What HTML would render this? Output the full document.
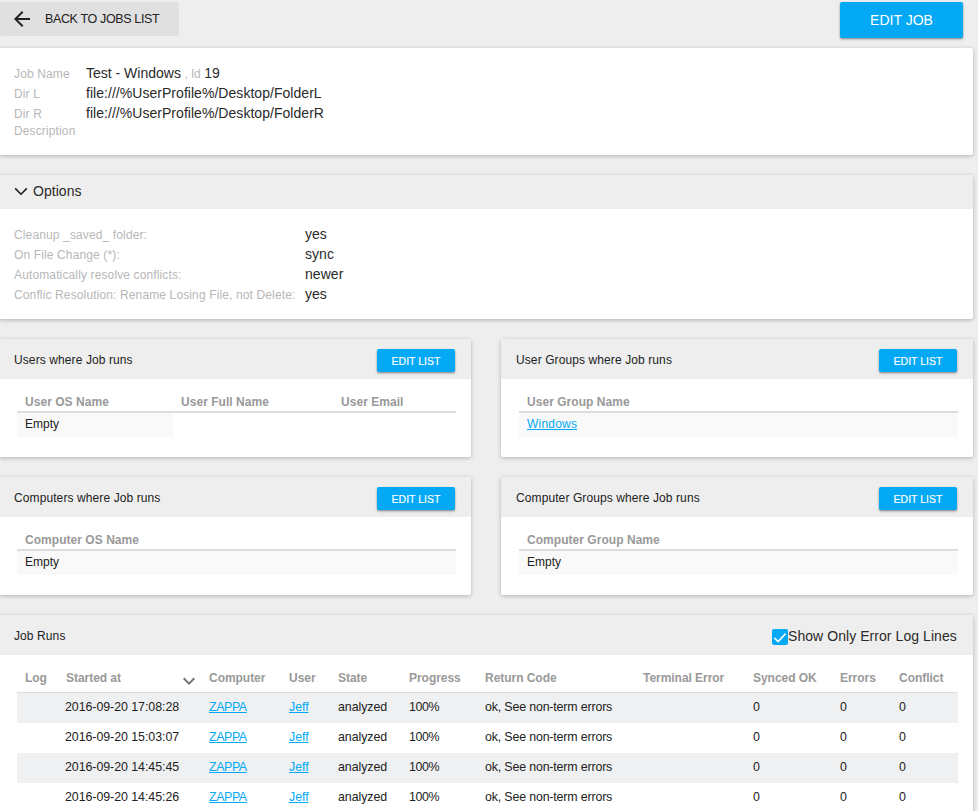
<!DOCTYPE html>
<html lang="en">
<head>
<meta charset="utf-8">
<title>Job</title>
<style>
html,body{margin:0;padding:0;}
body{width:978px;height:811px;overflow:hidden;position:relative;background:#eeeeee;font-family:"Liberation Sans",sans-serif;color:#212121;font-size:14px;}
*{box-sizing:border-box;}
.card{position:absolute;background:#fff;border-radius:2px;box-shadow:0 1px 4px 0 rgba(0,0,0,.26);}
.hdr{position:absolute;left:0;top:0;right:0;background:#eeeeee;border-radius:2px 2px 0 0;}
.btn{position:absolute;border-radius:2px;text-align:center;white-space:nowrap;}
.blue{background:#03a9f4;color:#fff;box-shadow:0 1px 2px 0 rgba(0,0,0,.36),0 2px 3px 0 rgba(0,0,0,.1);}
.t{position:absolute;white-space:nowrap;line-height:1;}
.lbl{color:#b7b7b7;font-size:12px;letter-spacing:0.13px;}
.val{color:#2a2a2a;font-size:14px;letter-spacing:0.04px;}
.ttl{font-size:12px;color:#212121;letter-spacing:0.1px;}
a{color:#03a9f4;text-decoration:underline;}
table{position:absolute;border-collapse:separate;border-spacing:0;table-layout:fixed;}
th{color:#999999;font-weight:bold;font-size:12px;letter-spacing:0.04px;text-align:left;padding:0 8px;white-space:nowrap;vertical-align:top;}
td{font-size:12px;color:#212121;padding:0 8px;white-space:nowrap;vertical-align:top;}
.small th{height:21px;border-bottom:2px solid #dddddd;padding-top:3px;line-height:14px;}
.small td{height:24px;padding-top:4px;line-height:14px;}
.small td.z{background:#f9f9f9;}
.runs th{letter-spacing:-0.04px;height:38px;border-bottom:1px solid #dddddd;padding-top:16px;line-height:14px;}
.runs td{height:30px;padding-top:7px;line-height:14px;font-size:12.4px;letter-spacing:-0.05px;}
.runs tr.z td{background:#eff0f1;}
.runs td:nth-child(2){padding-left:7px;}
.runs td:nth-child(3){letter-spacing:-0.4px;}
.runs td:nth-child(6){letter-spacing:-0.35px;}
.runs td:nth-child(7){letter-spacing:-0.16px;}
</style>
</head>
<body>

<!-- top bar -->
<div class="btn" style="left:0;top:2px;width:179px;height:34px;background:#e0e0e0;">
  <svg style="position:absolute;left:10px;top:5px" width="24" height="24" viewBox="0 0 24 24"><path d="M20 11H7.83l5.59-5.59L12 4l-8 8 8 8 1.41-1.41L7.83 13H20v-2z" fill="#212121"/></svg>
  <span class="t" style="left:45px;top:11px;font-size:12.5px;letter-spacing:-0.36px;color:#212121;">BACK TO JOBS LIST</span>
</div>
<div class="btn blue" style="left:840px;top:2px;width:123px;height:36px;font-size:14px;line-height:36px;">EDIT JOB</div>

<!-- job info -->
<div class="card" style="left:-1px;top:48px;width:974px;height:107px;">
  <span class="t lbl" style="left:15px;top:20px;">Job Name</span>
  <span class="t val" style="left:87px;top:18px;letter-spacing:0;">Test - Windows <span class="lbl" style="letter-spacing:-0.3px;">, Id</span> 19</span>
  <span class="t lbl" style="left:15px;top:40px;">Dir L</span>
  <span class="t val" style="left:87px;top:38px;">file:///%UserProfile%/Desktop/FolderL</span>
  <span class="t lbl" style="left:15px;top:60px;">Dir R</span>
  <span class="t val" style="left:87px;top:58px;">file:///%UserProfile%/Desktop/FolderR</span>
  <span class="t lbl" style="left:15px;top:77px;">Description</span>
</div>

<!-- options -->
<div class="card" style="left:-1px;top:175px;width:974px;height:144px;">
  <div class="hdr" style="height:34px;">
    <svg style="position:absolute;left:15px;top:12px" width="14" height="10" viewBox="0 0 14 10"><path d="M1.2 1.4L7 7.2l5.8-5.8" fill="none" stroke="#1a1a1a" stroke-width="1.5"/></svg>
    <span class="t val" style="left:34px;top:9px;">Options</span>
  </div>
  <span class="t lbl" style="left:15px;top:54px;">Cleanup _saved_ folder:</span>
  <span class="t val" style="left:306px;top:52px;">yes</span>
  <span class="t lbl" style="left:15px;top:74px;">On File Change (*):</span>
  <span class="t val" style="left:306px;top:72px;">sync</span>
  <span class="t lbl" style="left:15px;top:94px;">Automatically resolve conflicts:</span>
  <span class="t val" style="left:306px;top:92px;">newer</span>
  <span class="t lbl" style="left:15px;top:114px;">Conflic Resolution: Rename Losing File, not Delete:</span>
  <span class="t val" style="left:306px;top:112px;">yes</span>
</div>

<!-- users -->
<div class="card" style="left:-1px;top:339px;width:472px;height:118px;">
  <div class="hdr" style="height:40px;">
    <span class="t ttl" style="left:15px;top:15px;">Users where Job runs</span>
    <div class="btn blue" style="left:378px;top:10px;width:78px;height:23px;font-size:10.5px;line-height:24px;-webkit-text-stroke:0.15px #fff;">EDIT LIST</div>
  </div>
  <table class="small" style="left:18px;top:53px;width:439px;">
    <colgroup><col style="width:156px"><col style="width:160px"><col style="width:123px"></colgroup>
    <tr><th>User OS Name</th><th>User Full Name</th><th>User Email</th></tr>
    <tr><td class="z">Empty</td><td></td><td></td></tr>
  </table>
</div>

<!-- user groups -->
<div class="card" style="left:501px;top:339px;width:472px;height:118px;">
  <div class="hdr" style="height:40px;">
    <span class="t ttl" style="left:15px;top:15px;">User Groups where Job runs</span>
    <div class="btn blue" style="left:378px;top:10px;width:78px;height:23px;font-size:10.5px;line-height:24px;-webkit-text-stroke:0.15px #fff;">EDIT LIST</div>
  </div>
  <table class="small" style="left:18px;top:53px;width:439px;">
    <tr><th>User Group Name</th></tr>
    <tr><td class="z"><a style="letter-spacing:0.2px">Windows</a></td></tr>
  </table>
</div>

<!-- computers -->
<div class="card" style="left:-1px;top:477px;width:472px;height:118px;">
  <div class="hdr" style="height:40px;">
    <span class="t ttl" style="left:15px;top:15px;">Computers where Job runs</span>
    <div class="btn blue" style="left:378px;top:10px;width:78px;height:23px;font-size:10.5px;line-height:24px;-webkit-text-stroke:0.15px #fff;">EDIT LIST</div>
  </div>
  <table class="small" style="left:18px;top:53px;width:439px;">
    <tr><th>Computer OS Name</th></tr>
    <tr><td class="z">Empty</td></tr>
  </table>
</div>

<!-- computer groups -->
<div class="card" style="left:501px;top:477px;width:472px;height:118px;">
  <div class="hdr" style="height:40px;">
    <span class="t ttl" style="left:15px;top:15px;">Computer Groups where Job runs</span>
    <div class="btn blue" style="left:378px;top:10px;width:78px;height:23px;font-size:10.5px;line-height:24px;-webkit-text-stroke:0.15px #fff;">EDIT LIST</div>
  </div>
  <table class="small" style="left:18px;top:53px;width:439px;">
    <tr><th>Computer Group Name</th></tr>
    <tr><td class="z">Empty</td></tr>
  </table>
</div>

<!-- job runs -->
<div class="card" style="left:-1px;top:615px;width:974px;height:230px;">
  <div class="hdr" style="height:40px;">
    <span class="t ttl" style="left:15px;top:15px;">Job Runs</span>
    <span style="position:absolute;left:773px;top:14px;width:16px;height:16px;background:#03a9f4;border-radius:2px;">
      <svg style="position:absolute;left:0;top:0" width="16" height="16" viewBox="0 0 16 16"><path d="M2.3 8.7L6.1 12.5l7.5-7.9" fill="none" stroke="#fff" stroke-width="1.6"/></svg>
    </span>
    <span class="t val" style="left:789px;top:14px;letter-spacing:0.06px;">Show Only Error Log Lines</span>
  </div>
  <table class="runs" style="left:18px;top:40px;width:941px;">
    <colgroup><col style="width:41px"><col style="width:143px"><col style="width:80px"><col style="width:49px"><col style="width:71px"><col style="width:76px"><col style="width:158px"><col style="width:110px"><col style="width:87px"><col style="width:59px"><col style="width:67px"></colgroup>
    <tr><th>Log</th><th style="position:relative">Started at<svg style="position:absolute;left:119px;top:13.5px" width="24" height="24" viewBox="0 0 24 24"><path d="M16.59 8.59L12 13.17 7.41 8.59 6 10l6 6 6-6z" fill="#757575"/></svg></th><th>Computer</th><th>User</th><th>State</th><th>Progress</th><th>Return Code</th><th>Terminal Error</th><th>Synced OK</th><th>Errors</th><th>Conflict</th></tr>
    <tr class="z"><td></td><td>2016-09-20 17:08:28</td><td><a>ZAPPA</a></td><td><a>Jeff</a></td><td>analyzed</td><td>100%</td><td>ok, See non-term errors</td><td></td><td>0</td><td>0</td><td>0</td></tr>
    <tr><td></td><td>2016-09-20 15:03:07</td><td><a>ZAPPA</a></td><td><a>Jeff</a></td><td>analyzed</td><td>100%</td><td>ok, See non-term errors</td><td></td><td>0</td><td>0</td><td>0</td></tr>
    <tr class="z"><td></td><td>2016-09-20 14:45:45</td><td><a>ZAPPA</a></td><td><a>Jeff</a></td><td>analyzed</td><td>100%</td><td>ok, See non-term errors</td><td></td><td>0</td><td>0</td><td>0</td></tr>
    <tr><td></td><td>2016-09-20 14:45:26</td><td><a>ZAPPA</a></td><td><a>Jeff</a></td><td>analyzed</td><td>100%</td><td>ok, See non-term errors</td><td></td><td>0</td><td>0</td><td>0</td></tr>
  </table>
</div>

</body>
</html>
